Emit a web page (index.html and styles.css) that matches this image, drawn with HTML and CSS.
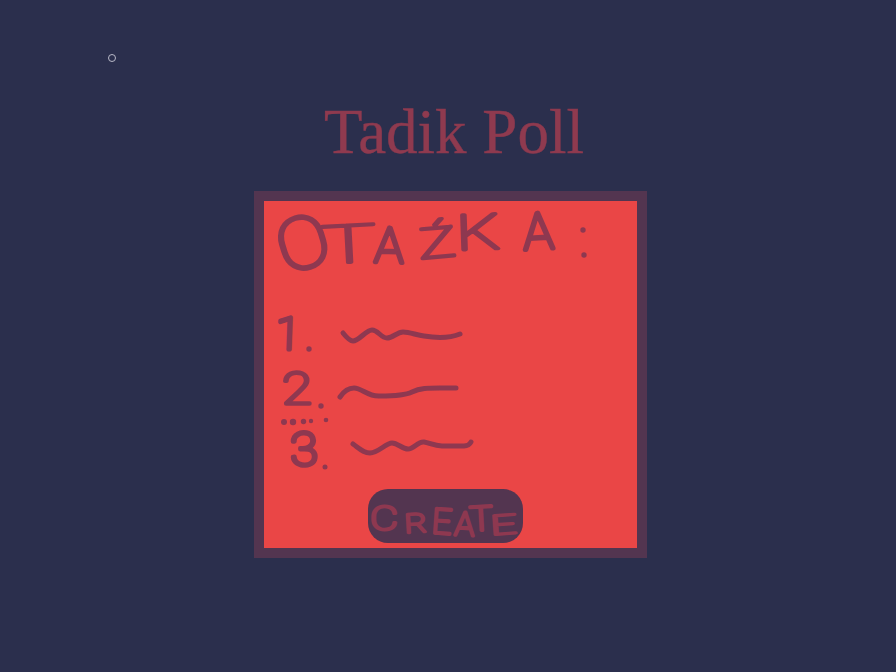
FILE: index.html
```html
<!DOCTYPE html>
<html lang="en">
<head>
    <meta charset="UTF-8">
    <meta name="viewport" content="width=device-width, initial-scale=1.0">
    <title>Tadik Poll</title>
    <link rel="stylesheet" href="styles.css">
</head>
<body>
    <nav class="nav">
        <span class="nav-dot"></span>
    </nav>

    <h1 class="title">Tadik Poll</h1>

    <div class="poll-frame">
        <div class="poll-card">
            <svg class="sketch" viewBox="264 201 373 288" width="373" height="288">
                <!-- handwritten question -->
                <text class="ink ink-wide" transform="translate(285 275) rotate(-17) scale(1.2 1.1)" font-size="66">O</text>
                <text class="ink ink-thin" transform="translate(322 264) rotate(-3) scale(1.75 1)" font-size="53">T</text>
                <text class="ink" transform="translate(374 262) rotate(2)" font-size="49">A</text>
                <text class="ink ink-wide" transform="translate(420 259) rotate(-5) scale(1.35 .92)" font-size="46">Ź</text>
                <text class="ink ink-wide" transform="translate(457 250) rotate(-2) scale(1.4 1)" font-size="49">K</text>
                <text class="ink" transform="translate(524 250) rotate(-3)" font-size="51">A</text>
                <circle class="dot" cx="583" cy="230" r="2.700"/>
                <circle class="dot" cx="584" cy="255" r="2.700"/>

                <!-- answers -->
                <text class="ink" transform="translate(275 349) rotate(2)" font-size="45">1</text>
                <circle class="dot" cx="309" cy="349" r="2.700"/>
                <path class="line" d="M343 333C347 338 350 341 353 341C359 341 366 330 372 330C378 330 381 338 387 338C393 338 397 332 403 332C410 332 416 335 424 336C436 338 450 338 460 334"/>

                <text class="ink ink-wide" transform="translate(282 404) scale(1.25 1)" font-size="44">2</text>
                <circle class="dot" cx="321" cy="406" r="2.700"/>
                <path class="line" d="M340 397C344 391 349 388 354 388C362 388 368 397 380 396C392 396 406 395 412 392C420 388 428 388 440 388L456 388"/>

                <circle class="dot" cx="284" cy="422" r="3"/>
                <circle class="dot" cx="293" cy="422" r="3.200"/>
                <circle class="dot" cx="303.500" cy="421.500" r="2.700"/>
                <circle class="dot" cx="311" cy="421" r="2.200"/>
                <circle class="dot" cx="326" cy="420" r="2.300"/>

                <text class="ink" transform="translate(291 466) rotate(-3) scale(1.1 1)" font-size="46">3</text>
                <circle class="dot" cx="325" cy="467" r="2.500"/>
                <path class="line" d="M353 444C360 449 364 453 370 453C378 453 386 443 392 443C398 443 402 449 408 449C414 449 418 441 424 442C430 443 434 446 442 446L464 446C468 446 470 444 471 442"/>
            </svg>
            <button class="create-btn" type="button">
                <svg viewBox="368 489 155 54" width="155" height="54">
                    <text class="ink ink-btn" transform="translate(370 530) scale(1.2 .9)" font-size="36">C</text>
                    <text class="ink ink-btn" transform="translate(405 533) rotate(-3) scale(1.1 .85)" font-size="31">R</text>
                    <text class="ink ink-btn" transform="translate(431 533) rotate(4)" font-size="35">E</text>
                    <text class="ink ink-btn" transform="translate(454 535) rotate(3)" font-size="33">A</text>
                    <text class="ink ink-btn" transform="translate(470 531) rotate(-3) scale(1.15 1)" font-size="34">T</text>
                    <text class="ink ink-btn" transform="translate(491 535) rotate(-4) scale(1.35 .8)" font-size="34">E</text>
                </svg>
            </button>
        </div>
    </div>
</body>
</html>
```

FILE: styles.css
```css
body {
    font-family: "Liberation Serif", serif;
    background-color: #2b2f4d;
    margin: 0;
    padding: 0;
}
.nav {
    display: flex;
    height: 95px;
    padding: 54px 0 0 108px;
    box-sizing: border-box;
}
.nav-dot {
    width: 8px;
    height: 8px;
    box-sizing: border-box;
    border: 1px solid #b9b9c8;
    border-radius: 50%;
}
.title {
    margin: 0 0 22px 12px;
    font-size: 63px;
    font-weight: 400;
    line-height: 74px;
    text-align: center;
    color: #8f3a4f;
    -webkit-text-stroke: 0.4px #8f3a4f;
}
.poll-frame {
    width: 393px;
    height: 367px;
    box-sizing: border-box;
    margin-left: 254px;
    border: 10px solid #533550;
}
.poll-card {
    display: flex;
    flex-direction: column;
    align-items: flex-start;
    height: 100%;
    background-color: #ea4646;
}
.sketch {
    display: block;
    overflow: visible;
}
.create-btn {
    display: block;
    width: 155px;
    height: 54px;
    margin-left: 104px;
    padding: 0;
    border: none;
    border-radius: 20px;
    background-color: #533550;
}
.create-btn svg {
    display: block;
    overflow: visible;
}
.ink {
    font-family: Roboto, "Liberation Sans", sans-serif;
    font-weight: 100;
    fill: #8e3850;
    stroke: #8e3850;
    stroke-width: 4.200px;
    stroke-linejoin: round;
    stroke-linecap: round;
}
.ink-wide {
    stroke-width: 3.400px;
}
.ink-thin {
    stroke-width: 2.800px;
}
.ink-btn {
    stroke-width: 3.200px;
}
.dot {
    fill: #8e3850;
}
.line {
    fill: none;
    stroke: #8e3850;
    stroke-width: 5px;
    stroke-linecap: round;
    stroke-linejoin: round;
}
```
